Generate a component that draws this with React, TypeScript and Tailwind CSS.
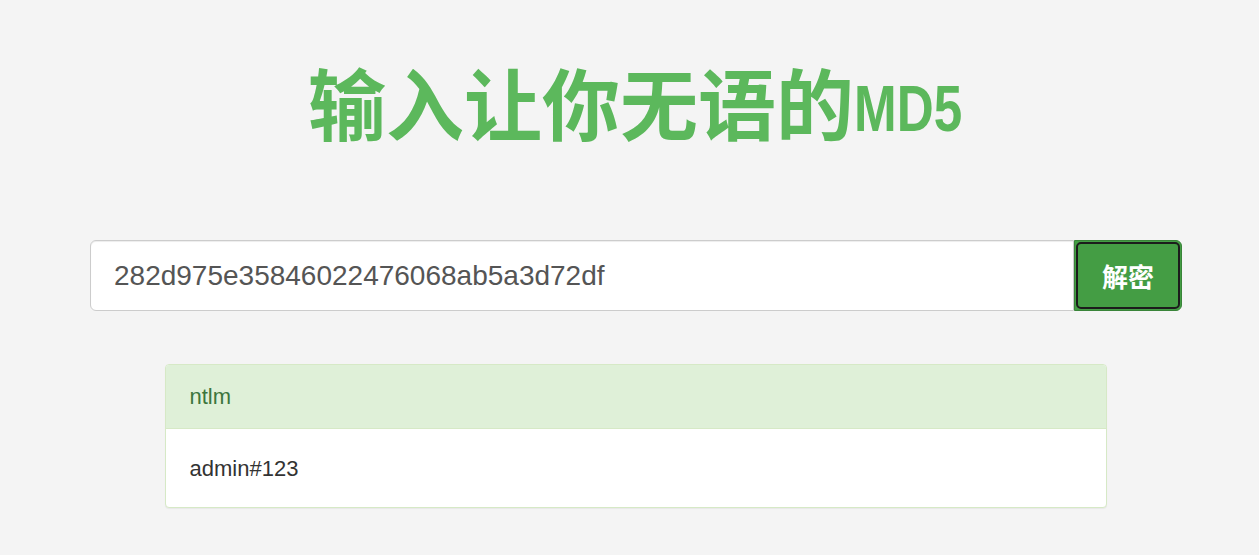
import { useState } from 'react';

export default function App() {
  const [hash, setHash] = useState('282d975e35846022476068ab5a3d72df');

  return (
    <div className="min-h-[555px] w-full bg-[#f4f4f4] font-['Liberation_Sans',Arial,sans-serif]">
      <div className="pl-[13px] pt-[57px]">
        <h1 className="h-[88px] text-center text-[78px] leading-[88px] font-bold text-[#5cb85c] font-['Noto_Sans_CJK_SC',sans-serif]">
          输入让你无语的
          {/* narrow latin part, squeezed to the reference width */}
          <span className="inline-block w-[110px] whitespace-nowrap text-left leading-none">
            <span className="inline-block origin-left -translate-y-[4px] scale-x-[0.8] font-['Liberation_Sans',Arial,sans-serif] text-[64px]">MD5</span>
          </span>
        </h1>
      </div>

      <div className="mt-[95px] ml-[90px] flex w-[1092px]">
        <input
          value={hash}
          onChange={e => setHash(e.target.value)}
          className="h-[71px] flex-1 rounded-l-md border border-[#ccc] bg-white px-[23px] text-[28px] text-[#555] shadow-[inset_0_1px_1px_rgba(0,0,0,0.075)] focus:outline-none"
        />
        <button className="h-[71px] w-[108px] rounded-r-md border border-[#398439] bg-[#449d44] p-[1px]">
          <span className="flex h-full w-full items-center justify-center rounded-[5px] border-2 border-[#1c1c1c] text-[26px] font-bold text-white font-['Noto_Sans_CJK_SC',sans-serif]">
            解密
          </span>
        </button>
      </div>

      <div className="mx-auto mt-[53px] w-[942px] translate-x-[6px] overflow-hidden rounded border border-[#d6e9c6] bg-white shadow-[0_1px_1px_rgba(0,0,0,0.05)]">
        <div className="flex h-[64px] items-center border-b border-[#d6e9c6] bg-[#dff0d8] px-6 text-[22px] text-[#3c763d]">
          ntlm
        </div>
        <div className="flex h-[78px] items-center px-6 text-[22px] text-[#333]">
          admin#123
        </div>
      </div>
    </div>
  );
}
